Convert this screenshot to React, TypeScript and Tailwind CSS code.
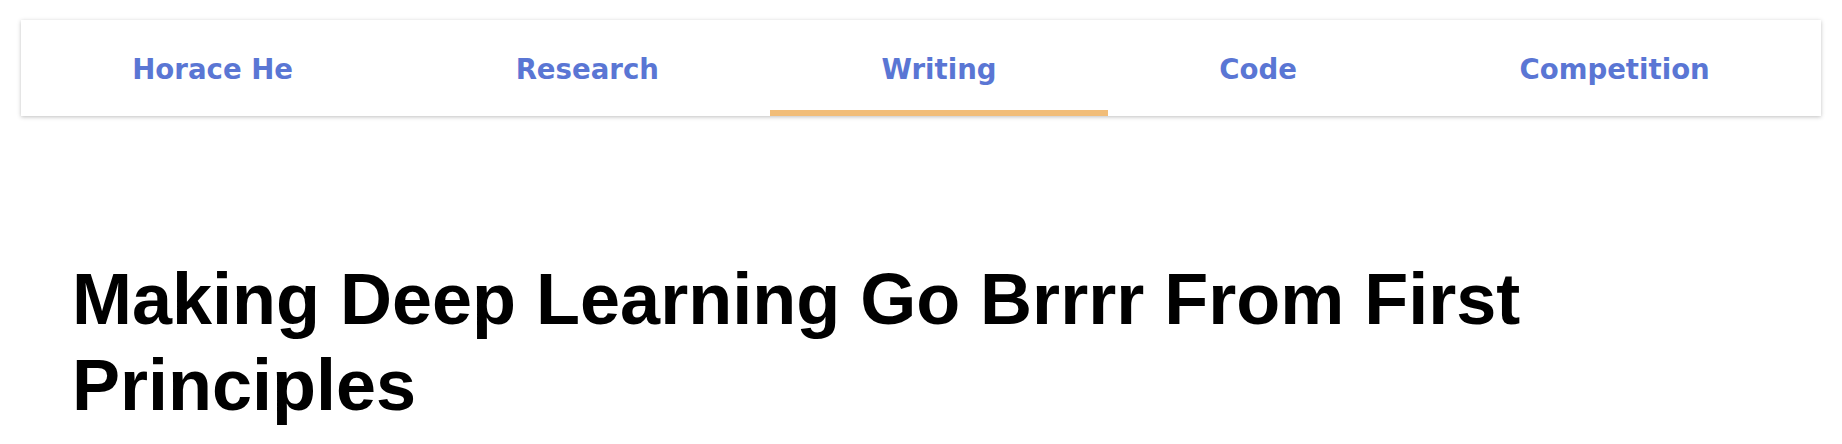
import React from 'react';

const navItems = ['Horace He', 'Research', 'Writing', 'Code', 'Competition'];

const NavBar: React.FC<{ active: string }> = ({ active }) => (
  <nav className="mx-[21px] mt-[20px] flex h-[96px] bg-white shadow-[0_1px_4px_rgba(0,0,0,0.25)]">
    {navItems.map((item) => (
      <a
        key={item}
        href="#"
        className={`flex grow items-center justify-center pt-[4px] font-['DejaVu_Sans',Verdana,sans-serif] text-[27.6px] font-bold text-[#5a76d4] no-underline ${
          item === active ? 'shadow-[inset_0_-6px_0_#f1bd79]' : ''
        }`}
      >
        {item}
      </a>
    ))}
  </nav>
);

export default function App() {
  return (
    <div className="min-h-screen bg-white">
      <NavBar active="Writing" />
      <main className="pl-[72px] pr-[40px] pt-[140px]">
        <h1 className="font-['Liberation_Sans',Helvetica,Arial,sans-serif] text-[72px] font-bold leading-[1.2] text-black">
          Making Deep Learning Go Brrrr From First Principles
        </h1>
      </main>
    </div>
  );
}
